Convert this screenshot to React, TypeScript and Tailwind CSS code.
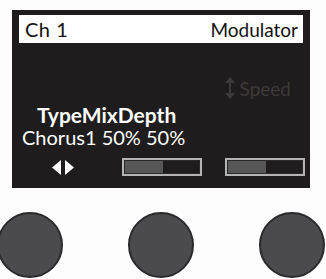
import React from "react";

function Knob() {
  return (
    <div className="w-[66px] h-[66px] shrink-0 rounded-full bg-[#4b4b4d] border-[2px] border-[#2a2a2c]" />
  );
}

function Bar() {
  return (
    <div className="w-[80px] h-[18px] border-[2px] border-[#b4b4b4] flex p-[1px] bg-[#2a2a2a]">
      <div className="w-[38px] h-full bg-[#575757]" />
      <div className="flex-1 h-full bg-[#1e1c1c]" />
    </div>
  );
}

export default function App() {
  return (
    <div
      className="w-[326px] h-[279px] bg-[#fdfdfd] overflow-hidden flex flex-col"
      style={{ fontFamily: "Lato, 'Open Sans', sans-serif" }}
    >
      <div className="ml-[12px] mt-[10px] w-[298px] h-[178px] bg-[#1e1c1c] flex flex-col shrink-0">
        <div className="mx-[7px] mt-[5px] h-[28px] bg-white flex items-center justify-between pl-[6px] pr-[5px] text-[19px] leading-none text-[#111]">
          <span className="text-[20px] tracking-[0.5px]">Ch 1</span>
          <span>Modulator</span>
        </div>
        <div className="mt-[35px] flex items-center justify-end pr-[19px] h-[20px]">
          <svg width="12" height="22" viewBox="0 0 12 22" className="mr-[4px]">
            <line x1="6" y1="3" x2="6" y2="19" stroke="#3c3a3a" strokeWidth="2" />
            <polygon points="6,0 1,6 11,6" fill="#3c3a3a" />
            <polygon points="6,22 1,16 11,16" fill="#3c3a3a" />
          </svg>
          <span className="text-[19px] leading-none text-[#3c3a3a]">Speed</span>
        </div>
        <div className="ml-[25px] mt-[5px] text-[21px] leading-[23px] font-bold text-white">TypeMixDepth</div>
        <div className="ml-[10px] text-[20px] leading-[22px] text-white">Chorus1 50% 50%</div>
        <div className="mt-[10px] flex items-center">
          <svg width="22" height="15" viewBox="0 0 22 15" className="ml-[40px]">
            <polygon points="0,7.5 9,0 9,15" fill="#ffffff" />
            <polygon points="22,7.5 13,0 13,15" fill="#ffffff" />
          </svg>
          <div className="ml-[48px]">
            <Bar />
          </div>
          <div className="ml-[23px]">
            <Bar />
          </div>
        </div>
      </div>
      <div className="mt-[24px] flex ml-[-3px] gap-[65px]">
        <Knob />
        <Knob />
        <Knob />
      </div>
    </div>
  );
}
